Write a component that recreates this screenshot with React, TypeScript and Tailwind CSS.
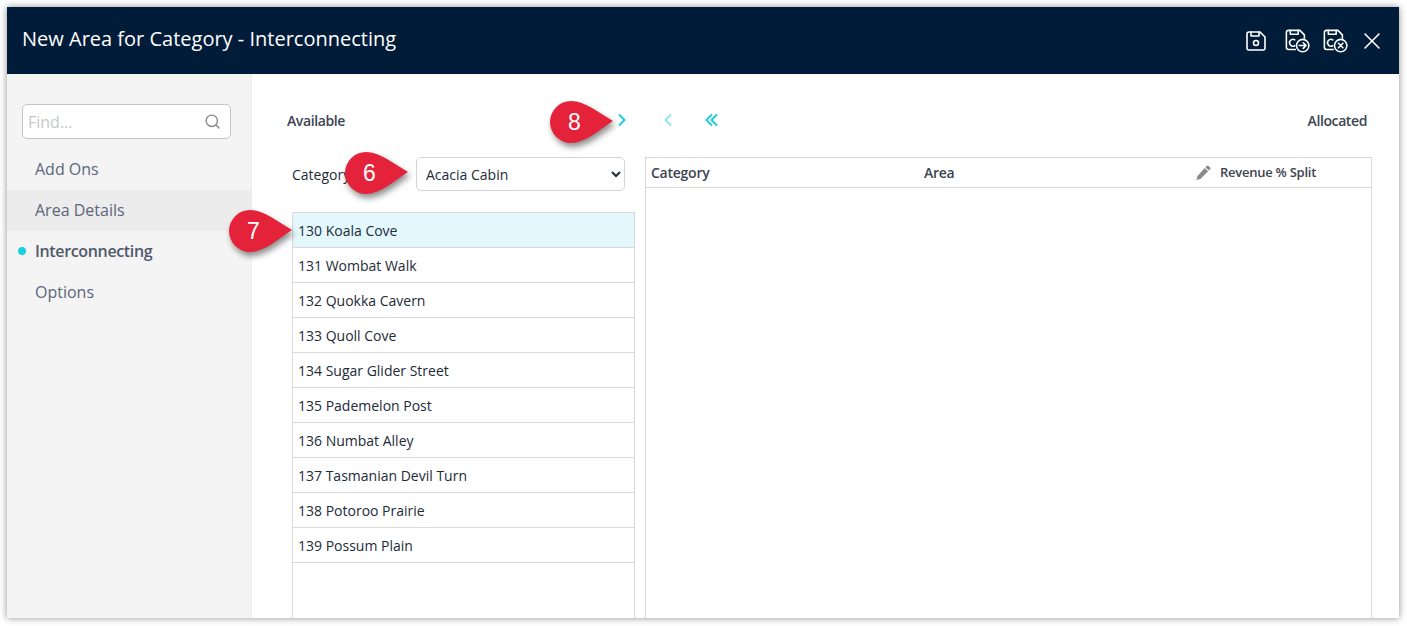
import React from "react";
import { Search, X } from "lucide-react";

const rooms = [
  "130 Koala Cove",
  "131 Wombat Walk",
  "132 Quokka Cavern",
  "133 Quoll Cove",
  "134 Sugar Glider Street",
  "135 Pademelon Post",
  "136 Numbat Alley",
  "137 Tasmanian Devil Turn",
  "138 Potoroo Prairie",
  "139 Possum Plain",
];

const Floppy = ({ badge }: { badge?: "go" | "cancel" }) => (
  <svg width={badge ? 27 : 24} height={badge ? 27 : 24} viewBox="0 0 24 24" fill="none" stroke="white" strokeWidth={badge ? 1.4 : 1.6} strokeLinejoin="round" strokeLinecap="round">
    {badge ? (
      <>
        <path d="M11 20H5a2 2 0 0 1-2-2V5a2 2 0 0 1 2-2h10l4 4v3" />
        <path d="M6.5 3v3.5h7V3" />
        <path d="M10.5 11.5a3 3 0 1 0 0 5" />
        <circle cx="17.5" cy="16.5" r="5.5" />
        {badge === "go" ? (
          <path d="M14.5 16.5h6M18 14l2.5 2.5L18 19" />
        ) : (
          <path d="M15.5 14.5l4 4M19.5 14.5l-4 4" />
        )}
      </>
    ) : (
      <>
        <path d="M5 3h11l5 5v11a2 2 0 0 1-2 2H5a2 2 0 0 1-2-2V5a2 2 0 0 1 2-2z" />
        <path d="M7 3v4h8V3" />
        <circle cx="12" cy="14" r="2.5" />
      </>
    )}
  </svg>
);

const Chevron = ({ left, faded }: { left?: boolean; faded?: boolean }) => (
  <svg width="12" height="14" viewBox="0 0 12 14" fill="none" stroke="#22ccd6" strokeWidth="2" className={faded ? "opacity-50" : ""}>
    <path d={left ? "M9 1.5L3.5 7 9 12.5" : "M3 1.5L8.5 7 3 12.5"} />
  </svg>
);

const Callout = ({ n, className }: { n: number; className: string }) => (
  <div className={"absolute w-[64px] h-[42px] " + className}>
    <svg width="64" height="42" viewBox="0 0 64 42" className="absolute inset-0 overflow-visible drop-shadow-[2px_4px_3px_rgba(0,0,0,0.45)]">
      <path d="M21 0C35 0 49 12 63 20C49 29 35 42 21 42A21 21 0 0 1 21 0Z" fill="#e4233a" />
    </svg>
    <span className="absolute left-0 top-0 w-[49px] h-[42px] flex items-center justify-center text-white text-[23px] font-['Liberation_Sans',sans-serif]">
      {n}
    </span>
  </div>
);

const App = () => {
  return (
    <div className="relative w-[1407px] h-[626px] bg-white pl-[7px] pt-[7px] overflow-hidden font-['Open_Sans',sans-serif]">
      <div className="w-[1392px] h-[611px] flex flex-col bg-white shadow-[0_0_7px_rgba(0,0,0,0.45)]">
        <div className="h-[67px] shrink-0 bg-[#001c38] flex items-center pl-[15px] pr-[13px] text-white">
          <h1 className="text-[20px] flex-1 mb-[4px]">New Area for Category - Interconnecting</h1>
          <div className="flex items-center">
            <Floppy />
            <span className="w-[15px]" />
            <Floppy badge="go" />
            <span className="w-[11px]" />
            <Floppy badge="cancel" />
            <span className="w-[10px]" />
            <X size={28} strokeWidth={1.3} />
          </div>
        </div>

        <div className="flex-1 flex min-h-0">
          <div className="w-[245px] shrink-0 bg-[#f4f4f4] border-r border-[#ececec]">
            <div className="mt-[30px] ml-[15px] w-[209px] h-[35px] bg-white border border-[#c4c4c4] rounded-[5px] flex items-center pl-[5px] pr-[9px]">
              <span className="flex-1 text-[16px] text-[#c8c8c8]">Find...</span>
              <Search size={17} className="text-[#8a8a8a]" />
            </div>
            <div className="mt-[10px] text-[16px] text-[#5c667a]">
              <div className="h-[41px] flex items-center pl-[28px] pb-[2px]">Add Ons</div>
              <div className="h-[41px] flex items-center pl-[28px] pb-[2px] bg-[#ececec]">Area Details</div>
              <div className="relative h-[41px] flex items-center pl-[28px] pb-[2px] font-semibold tracking-[-0.35px] text-[#4f596c]">
                <span className="absolute left-[11px] top-[16px] w-[8px] h-[8px] rounded-full bg-[#1ccfdc]" />
                Interconnecting
              </div>
              <div className="h-[41px] flex items-center pl-[28px] pb-[2px]">Options</div>
            </div>
          </div>

          <div className="flex-1 min-w-0 flex flex-col">
            <div className="mt-[26px] h-[40px] shrink-0 flex items-center pl-[35px] pr-[32px] text-[14px] font-semibold tracking-[-0.4px] text-[#3c4452]">
              <span className="w-[329px]">Available</span>
              <Chevron />
              <span className="w-[34px]" />
              <Chevron left faded />
              <span className="w-[29px]" />
              <span className="flex">
                <Chevron left />
                <span className="-ml-[7px]">
                  <Chevron left />
                </span>
              </span>
              <span className="ml-auto">Allocated</span>
            </div>

            <div className="mt-[17px] flex-1 min-h-0 flex gap-[10px] pl-[40px] pr-[27px]">
              <div className="w-[343px] flex flex-col">
                <div className="h-[34px] shrink-0 flex items-center justify-between pr-[10px]">
                  <span className="text-[14px] text-[#222b38]">Category</span>
                  <select className="w-[209px] h-[34px] bg-white border border-[#d4d4d4] rounded-[5px] pl-[5px] pr-[8px] text-[14px] text-[#222b38]" defaultValue="Acacia Cabin">
                    <option>Acacia Cabin</option>
                  </select>
                </div>
                <div className="mt-[21px] flex-1 border-x border-t border-[#d9d9d9]">
                  {rooms.map((room, i) => (
                    <div key={room} className={"h-[35px] flex items-center pl-[5px] text-[14px] text-[#222b38] border-b border-[#d9d9d9] " + (i === 0 ? "bg-[#e2f8fd]" : "")}>
                      {room}
                    </div>
                  ))}
                </div>
              </div>

              <div className="flex-1 min-w-0 border-x border-t border-[#d9d9d9]">
                <div className="h-[30px] flex items-center border-b border-[#d9d9d9] pl-[5px] text-[14px] font-semibold tracking-[-0.25px] text-[#3c4452]">
                  <span className="w-[273px]">Category</span>
                  <span className="w-[272px]">Area</span>
                  <svg width="15" height="15" viewBox="0 0 15 15" fill="#8a8a8a">
                    <path d="M10.6 1a1.4 1.4 0 0 1 2 0l1.4 1.4a1.4 1.4 0 0 1 0 2l-1.2 1.2-3.4-3.4zM8.7 2.9l3.4 3.4-7.7 7.7L.5 15l1-3.9z" />
                  </svg>
                  <span className="ml-[9px] text-[13px]">Revenue % Split</span>
                </div>
              </div>
            </div>
          </div>
        </div>
      </div>

      <Callout n={8} className="left-[550px] top-[101px]" />
      <Callout n={6} className="left-[345px] top-[152px]" />
      <Callout n={7} className="left-[229px] top-[210px]" />
    </div>
  );
};

export default App;
